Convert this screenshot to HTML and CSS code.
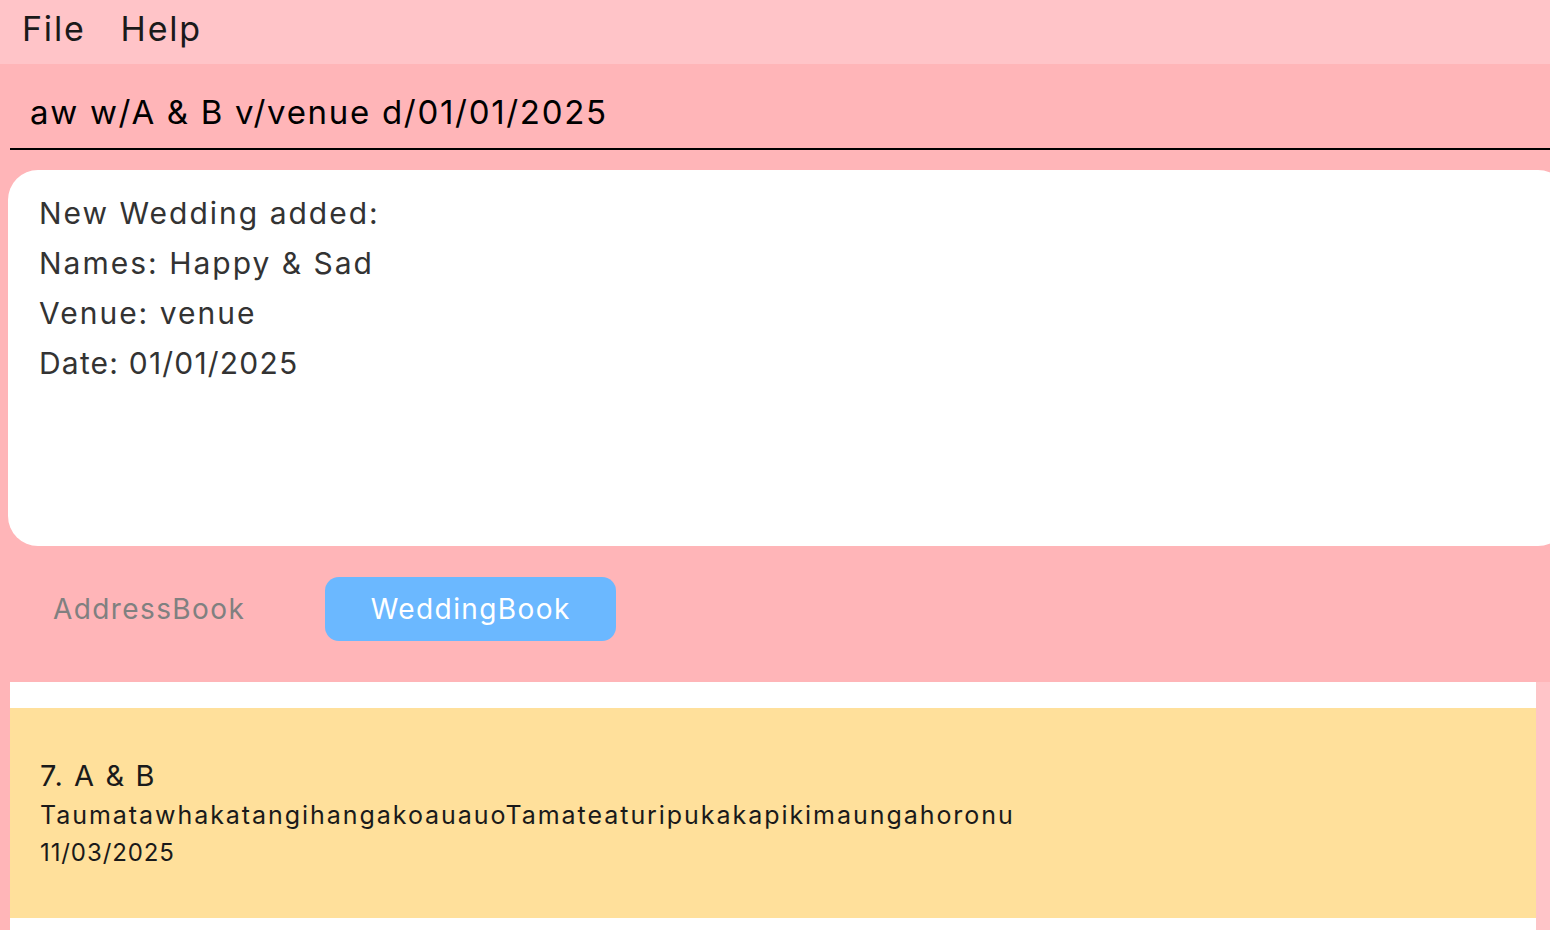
FILE: index.html
```html
<!DOCTYPE html>
<html>
<head>
<meta charset="utf-8">
<link rel="stylesheet" href="styles.css">
</head>
<body>
<div class="app">
  <div class="menubar">
    <span class="menu-item">File</span>
    <span class="menu-item">Help</span>
  </div>
  <div class="main">
    <div class="command">
      <div class="command-text">aw w/A &amp; B v/venue d/01/01/2025</div>
    </div>
    <div class="result">
      <div class="result-line">New Wedding added:</div>
      <div class="result-line">Names: Happy &amp; Sad</div>
      <div class="result-line">Venue: venue</div>
      <div class="result-line result-date">Date: 01/01/2025</div>
    </div>
    <div class="tabs">
      <div class="tab">AddressBook</div>
      <div class="tab tab-active">WeddingBook</div>
    </div>
    <div class="list-row">
      <div class="list">
        <div class="card">
          <div class="card-title">7. A &amp; B</div>
          <div class="card-line card-venue">TaumatawhakatangihangakoauauoTamateaturipukakapikimaungahoronu</div>
          <div class="card-line card-date">11/03/2025</div>
        </div>
      </div>
      <div class="scrollbar"></div>
    </div>
  </div>
</div>
</body>
</html>
```

FILE: styles.css
```css
html, body {
  margin: 0;
  padding: 0;
  width: 1550px;
  height: 930px;
  overflow: hidden;
  background: #ffb5b8;
  font-family: "Inter", "Noto Sans", sans-serif;
}

.app {
  width: 1550px;
  height: 930px;
  overflow: hidden;
  display: flex;
  flex-direction: column;
}

.menubar {
  height: 64px;
  background: #ffc4c8;
  display: flex;
  align-items: center;
  padding-left: 22px;
  padding-bottom: 8px;
  box-sizing: border-box;
  gap: 35px;
  color: #1a1a1a;
  font-size: 34px;
  letter-spacing: 1.8px;
}

.main {
  flex: 1;
  background: #ffb5b8;
  display: flex;
  flex-direction: column;
}

.command {
  padding-left: 10px;
}

.command-text {
  border-bottom: 2px solid #000;
  padding-left: 20px;
  display: flex;
  align-items: center;
  padding-top: 12px;
  box-sizing: border-box;
  height: 86px;
  font-size: 33px;
  letter-spacing: 1.7px;
  color: #000;
}

.result {
  margin-top: 20px;
  margin-left: 8px;
  width: 1560px;
  height: 376px;
  box-sizing: border-box;
  background: #fff;
  border-radius: 30px;
  padding: 18px 31px;
  color: #333;
  font-size: 30px;
  letter-spacing: 2px;
}

.result-line {
  height: 50px;
  line-height: 50px;
}

.result-date {
  letter-spacing: 1.2px;
}

.tabs {
  height: 136px;
  display: flex;
  align-items: center;
  padding-left: 26px;
  padding-bottom: 10px;
  box-sizing: border-box;
  font-size: 28px;
  letter-spacing: 1.4px;
}

.tab {
  height: 64px;
  display: flex;
  align-items: center;
  justify-content: center;
  padding: 0 27px;
  color: #808080;
  border-radius: 14px;
}

.tab + .tab {
  margin-left: 53px;
}

.tab-active {
  background: #6bb8ff;
  color: #fff;
  width: 291px;
  box-sizing: border-box;
  padding: 0;
}

.list-row {
  flex: 1;
  display: flex;
  padding-left: 10px;
}

.list {
  width: 1526px;
  background: #fff;
  padding-top: 26px;
  box-sizing: border-box;
}

.scrollbar {
  flex: 1;
  background: #ffc4c8;
}

.card {
  height: 210px;
  background: #ffe09b;
  box-sizing: border-box;
  padding: 47px 30px 0;
  color: #1a1a1a;
}

.card-title {
  font-size: 29px;
  line-height: 42px;
  letter-spacing: 1.6px;
}

.card-line {
  font-size: 24px;
  line-height: 37px;
}

.card-venue {
  font-size: 25px;
  letter-spacing: 1.95px;
}

.card-date {
  letter-spacing: 0.9px;
}
```
